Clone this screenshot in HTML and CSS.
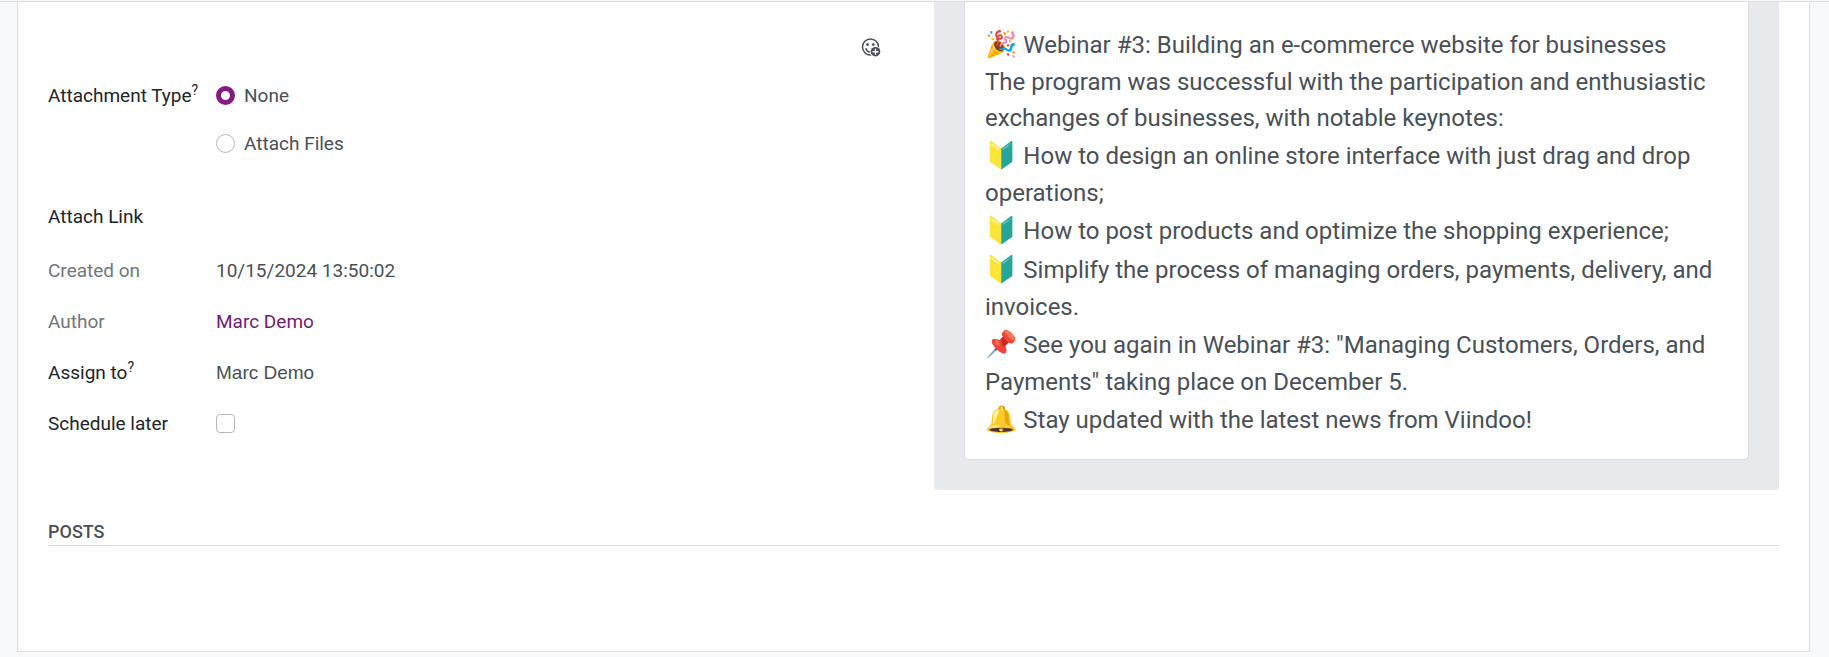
FILE: index.html
```
<!DOCTYPE html>
<html lang="en">

<head>
  <meta charset="UTF-8" />
  <meta name="viewport" content="width=device-width, initial-scale=1.0" />
  <title>Social Post</title>
  <link rel="stylesheet" href="styles.css">
</head>

<body>
  <main class="sheet">
    <div class="columns">
      <form class="details">
        <div class="toolbar">
          <button type="button" class="emoji-btn" aria-label="Add emoji">
            <svg viewBox="0 0 20 20" width="20" height="20">
              <circle cx="9.5" cy="9" r="8" fill="none" stroke="#495057" stroke-width="1.5" />
              <circle cx="6.5" cy="6.6" r="1.4" fill="#495057" />
              <circle cx="12.3" cy="6.6" r="1.4" fill="#495057" />
              <path d="M4.8 10.2c.6 2.2 2.2 3.7 4.4 3.9" fill="none" stroke="#495057" stroke-width="1.5" />
              <circle cx="14.5" cy="13.7" r="5.7" fill="#fff" />
              <circle cx="14.5" cy="13.7" r="4.8" fill="#495057" />
              <path d="M14.5 10.7v6M11.5 13.7h6" stroke="#fff" stroke-width="1.4" />
            </svg>
          </button>
        </div>

        <div class="row row-type">
          <span class="label" id="type-label">Attachment Type<sup>?</sup></span>
          <div class="options" role="radiogroup" aria-labelledby="type-label">
            <label><input type="radio" name="attachment" checked />None</label>
            <label><input type="radio" name="attachment" />Attach Files</label>
          </div>
        </div>
        <div class="row row-link">
          <span class="label">Attach Link</span>
        </div>
        <div class="row">
          <span class="label muted">Created on</span>
          <span>10/15/2024 13:50:02</span>
        </div>
        <div class="row">
          <span class="label muted">Author</span>
          <a href="#">Marc Demo</a>
        </div>
        <div class="row">
          <span class="label">Assign to<sup>?</sup></span>
          <span class="assignee">Marc Demo</span>
        </div>
        <div class="row">
          <label class="label" for="schedule">Schedule later</label>
          <input type="checkbox" id="schedule" />
        </div>
      </form>

      <section class="preview">
        <div class="card">
          <p><span class="emoji">🎉</span> Webinar #3: Building an e-commerce website for businesses</p>
          <p>The program was successful with the participation and enthusiastic exchanges of businesses, with notable keynotes:</p>
          <p><span class="emoji">🔰</span> How to design an online store interface with just drag and drop operations;</p>
          <p><span class="emoji">🔰</span> How to post products and optimize the shopping experience;</p>
          <p><span class="emoji">🔰</span> Simplify the process of managing orders, payments, delivery, and invoices.</p>
          <p><span class="emoji">📌</span> See you again in Webinar #3: "Managing Customers, Orders, and Payments" taking place on December 5.</p>
          <p><span class="emoji">🔔</span> Stay updated with the latest news from Viindoo!</p>
        </div>
      </section>
    </div>

    <h2>Posts</h2>
  </main>
</body>

</html>
```
FILE: styles.css
```
* {
  box-sizing: border-box;
}

body {
  margin: 0;
  padding-top: 1px;
  background: #f8f9fb;
  color: #495057;
  font-family: Roboto, sans-serif;
  font-size: 19px;
  line-height: 27px;
}

body::before {
  content: "";
  display: block;
  height: 1px;
  background: #dbdfe3;
}

.sheet {
  margin: 0 19px 0 17px;
  padding: 0 30px 105px;
  background: #fff;
  border: 1px solid #dbdfe3;
  border-top: 0;
}

.columns {
  display: grid;
  grid-template-columns: minmax(0, 886fr) minmax(0, 845fr);
}

.toolbar {
  display: flex;
  justify-content: flex-end;
  padding: 36px 53px 0 0;
}

.emoji-btn {
  display: flex;
  padding: 0;
  border: 0;
  background: none;
}

.row {
  display: grid;
  grid-template-columns: 168px 1fr;
  align-items: center;
  min-height: 51px;
}

.row-type {
  align-items: start;
  padding-top: 24px;
}

.row-link {
  min-height: 58px;
  margin-top: 30px;
}

.label {
  color: #212529;
}

.muted {
  color: #71767b;
}

sup {
  font-size: 14px;
  line-height: 0;
  vertical-align: 7px;
}

.options {
  display: grid;
  gap: 21px;
}

.options label {
  display: flex;
  align-items: center;
  gap: 9px;
}

input {
  appearance: none;
  width: 19px;
  height: 19px;
  margin: 0;
  background: #fff;
  border: 1px solid #b5b8bc;
  border-radius: 4px;
}

input[type="radio"] {
  border-radius: 50%;
}

input[type="radio"]:checked {
  border: 5px solid #851b80;
}

a {
  color: #741b72;
  text-decoration: none;
}

.assignee {
  font-family: "Liberation Sans", sans-serif;
}

.preview {
  padding: 0 30px 30px;
  background: #e7eaed;
  border-radius: 0 0 3px 3px;
}

.card {
  padding: 23px 20px 20px;
  background: #fff;
  border: 1px solid #d9dde1;
  border-top: 0;
  border-radius: 0 0 5px 5px;
  font-size: 24px;
  line-height: 36px;
}

.card p {
  margin: 0;
}

.emoji {
  display: inline-block;
  font-family: "Noto Color Emoji", sans-serif;
  font-size: 26px;
  line-height: 39px;
}

h2 {
  margin: 28px 0 0;
  border-bottom: 1px solid #dbdfe3;
  font-size: 18px;
  font-weight: 500;
  text-transform: uppercase;
}
```
